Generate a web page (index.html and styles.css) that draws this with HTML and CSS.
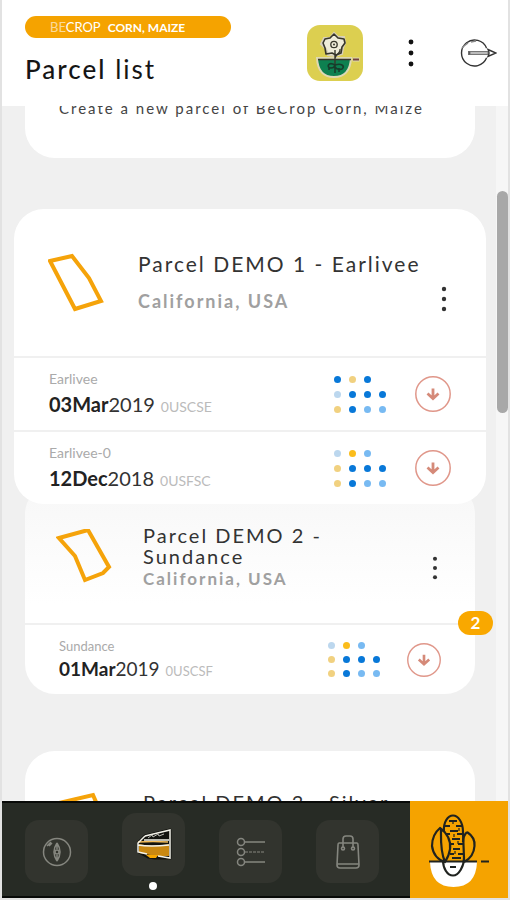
FILE: index.html
```html
<!DOCTYPE html>
<html lang="en">
<head>
<meta charset="utf-8">
<meta name="viewport" content="width=device-width, initial-scale=1">
<title>Parcel list</title>
<link rel="stylesheet" href="styles.css">
</head>
<body>
<svg class="defs" aria-hidden="true">
  <symbol id="kebab" viewBox="0 0 8 28"><circle cx="4" cy="4" r="2.2"/><circle cx="4" cy="14" r="2.2"/><circle cx="4" cy="24" r="2.2"/></symbol>
  <symbol id="down" viewBox="0 0 36 36">
    <circle cx="18" cy="18" r="17.2" fill="none" stroke="#e0978a" stroke-width="1.5"/>
    <path d="M18 12.500v10M12.500 17.500l5.500 5 5.500-5" fill="none" stroke="#d58a79" stroke-width="2.8"/>
    <path d="M13 18l5 3 5-3-5 5z" fill="#d58a79"/>
  </symbol>
</svg>
<div class="app">
  <header class="header">
    <div class="heading">
      <div class="tag"><span class="brand"><span class="be">BE</span>CROP</span><b>CORN, MAIZE</b></div>
      <h1><b>Parcel</b> list</h1>
    </div>
    <div class="actions">
      <button class="plain" type="button" aria-label="Crop">
        <svg width="56" height="56" viewBox="0 0 56 56">
          <rect width="56" height="56" rx="13" fill="#dccf50"/>
          <path d="M10 33h34q-1 19-17 19T10 33z" fill="#0d8050" stroke="#ddd8b4" stroke-width="2"/>
          <path d="M27 8l4 4 6 0 1 6-2 5-1 6-7 2-7-1-2-6-5-5 3-6 6 0z" fill="#efecd9" stroke="#d9d0b9" stroke-width="2"/>
          <path d="M27 9l4 4 6 1 1 4-3 4-1 6-5 2-4-2-6 1-1-6-2-5 2-4 5-1z" fill="none" stroke="#37362b" stroke-width="1.600" stroke-linejoin="round"/>
          <circle cx="27" cy="19.5" r="3.2" fill="none" stroke="#37362b" stroke-width="1.3"/>
          <circle cx="27" cy="19.5" r="1" fill="#37362b"/>
          <path d="M28 25v18M28 33c2-6 6-4 5-9M11 34.500h33" fill="none" stroke="#37362b" stroke-width="1.4"/>
          <path d="M28 40c-7-4-9 3-4 3s3-3 4-3c7-2 9 1 8 3s-6 2-8-1v6M22 42v3M32 43v4" fill="none" stroke="#173c2b" stroke-width="1.6"/>
          <path d="M45.500 34.500h7" stroke="#ddd8b4" stroke-width="4"/><path d="M46 34.500h6" stroke="#74423b" stroke-width="2"/>
        </svg>
      </button>
      <button class="plain" type="button" aria-label="More options"><svg class="more" width="8" height="28"><use href="#kebab"/></svg></button>
      <button class="plain" type="button" aria-label="Log out">
        <svg width="38" height="30" viewBox="0 0 38 30" fill="none" stroke="#333" stroke-width="1.4">
          <path d="M27.500 10A13 13 0 1 0 27.500 20"/>
          <path d="M3 10l3-3M5 8l4-3M12 4l5-1" stroke="#888"/>
          <path d="M11 13.500h18v3H11z" fill="#bbb" stroke="#777" stroke-width="1"/><path d="M10 13v4"/>
          <path d="M29 11.500l8 3.500-8 3.500q2-3.500 0-7z"/>
        </svg>
      </button>
    </div>
  </header>

  <main class="content">
    <div class="list">
      <section class="card create"><p>Create a new parcel of BeCrop Corn, Maize</p></section>

      <article class="card selected">
        <div class="summary">
          <svg class="shape" width="58" height="60" viewBox="0 0 58 60"><path d="M2 8l22-5 17 22 12 23-26 8z"/></svg>
          <div class="info"><h2>Parcel DEMO 1 - Earlivee</h2><p>California, USA</p></div>
          <button class="plain menu" type="button" aria-label="Parcel 1 options"><svg width="8" height="28"><use href="#kebab"/></svg></button>
        </div>
        <div class="sample">
          <div class="details"><span class="crop">Earlivee</span><div class="line"><span class="date"><b>03Mar</b>2019</span><span class="code">0USCSE</span></div></div>
          <div class="dots"><i class="b"></i><i class="y"></i><i class="b"></i><i></i><i class="p"></i><i class="b"></i><i class="b"></i><i class="b"></i><i class="y"></i><i class="b"></i><i class="l"></i><i class="l"></i></div>
          <button class="plain download" type="button" aria-label="Download Earlivee"><svg><use href="#down"/></svg></button>
        </div>
        <div class="sample">
          <div class="details"><span class="crop">Earlivee-0</span><div class="line"><span class="date"><b>12Dec</b>2018</span><span class="code">0USFSC</span></div></div>
          <div class="dots"><i class="p"></i><i class="g"></i><i class="l"></i><i></i><i class="y"></i><i class="b"></i><i class="b"></i><i class="b"></i><i class="y"></i><i class="b"></i><i class="l"></i><i class="l"></i></div>
          <button class="plain download" type="button" aria-label="Download Earlivee-0"><svg><use href="#down"/></svg></button>
        </div>
      </article>

      <article class="card tucked">
        <div class="summary">
          <svg class="shape" width="58" height="58" viewBox="0 0 58 58"><path d="M3 9l29-8 21 37-6 6-18 7-10-24z"/></svg>
          <div class="info"><h2>Parcel DEMO 2 - Sundance</h2><p>California, USA</p></div>
          <button class="plain menu" type="button" aria-label="Parcel 2 options"><svg width="8" height="26"><use href="#kebab"/></svg></button>
        </div>
        <div class="sample">
          <span class="badge">2</span>
          <div class="details"><span class="crop">Sundance</span><div class="line"><span class="date"><b>01Mar</b>2019</span><span class="code">0USCSF</span></div></div>
          <div class="dots"><i class="p"></i><i class="g"></i><i class="l"></i><i></i><i class="y"></i><i class="b"></i><i class="b"></i><i class="b"></i><i class="y"></i><i class="b"></i><i class="l"></i><i class="l"></i></div>
          <button class="plain download" type="button" aria-label="Download Sundance"><svg><use href="#down"/></svg></button>
        </div>
      </article>

      <article class="card next">
        <div class="summary">
          <svg class="shape" width="58" height="58" viewBox="0 0 58 58"><path d="M3 11l34-8 17 39-24 12z"/></svg>
          <div class="info"><h2>Parcel DEMO 3 - Silver</h2></div>
        </div>
      </article>
    </div>
    <div class="track"><div class="thumb"></div></div>
  </main>

  <nav class="nav">
    <div class="tabs">
      <button class="tab" type="button" aria-label="Explore">
        <svg width="30" height="30" viewBox="0 0 30 30" fill="none" stroke="#85867f" stroke-width="1.5">
          <circle cx="15" cy="15" r="13.500"/><path d="M15 6q-6 9 0 18M15 6q6 9 0 18M15 6v6M15 18v6"/><circle cx="15" cy="15" r="2"/><path d="M5 9l4-4M7 9l3-3"/>
        </svg>
      </button>
      <button class="tab active" type="button" aria-label="Parcels">
        <svg width="36" height="34" viewBox="0 0 36 34">
          <path d="M3 14L9 8l25-6v28H19l-7-1-9-5z" fill="#12130f" stroke="#12130f" stroke-width="3" stroke-linejoin="round"/>
          <path d="M3 16q14 3 30 0v12H20L3 25z" fill="#c98812"/><path d="M10 27h12l-2 3h-6z" fill="#f5a600"/>
          <path d="M2 14q15-1 30 0" fill="none" stroke="#f4bd59" stroke-width="1.500"/>
          <path d="M9 8l25-6v28l-12-2M9 8l-7 7v9l9 2M2 17q12 2 31 0M8 12h25" fill="none" stroke="#f4f3ea" stroke-width="1.500"/>
          <path d="M12 10l4-3 1 2 5-3 1 2 5-2" fill="none" stroke="#babab2"/>
        </svg>
      </button>
      <button class="tab" type="button" aria-label="Tasks">
        <svg width="32" height="32" viewBox="0 0 32 32" fill="none" stroke="#85867f" stroke-width="1.500">
          <circle cx="6" cy="6" r="3.500"/><circle cx="6" cy="16" r="3.500"/><circle cx="6" cy="26" r="3.500"/><path d="M10 6h20M10 26h20"/><path d="M10 16h20" stroke-dasharray="3 1" stroke-width="1.200"/>
        </svg>
      </button>
      <button class="tab" type="button" aria-label="Shop">
        <svg width="26" height="36" viewBox="0 0 26 36" fill="none" stroke="#85867f" stroke-width="1.600">
          <path d="M4 9h18q1 0 1 2l1 20q0 3-3 3H5q-3 0-3-3l1-20q0-2 1-2zM2 30h22M8 14V5q0-3 3-3h4q3 0 3 3v9"/><circle cx="8" cy="14.500" r="1.500"/><circle cx="18" cy="14.500" r="1.500"/>
        </svg>
      </button>
    </div>
    <button class="plain product" type="button" aria-label="BeCrop Corn">
      <svg width="98" height="97" viewBox="0 1 98 97" fill="none" stroke="#20231f" stroke-width="2.200">
        <path d="M20 62h47q-1 25-23.500 25T20 62z" fill="#fff" stroke="none"/>
        <path d="M19 61.500h48M71 61.500h8"/>
        <path d="M34 32C33 22 38 15.500 43 15.500S53 22 53 32L54 58C54 66 49 75.500 43 75.500S33 68 33 60"/>
        <path d="M30 28C24 33 22 40 22 46 23 54 28 60 35 62 40 54 42 45 38 37 36 33 33 30 30 28zM31 29C31 38 30 51 35 62M57 32C63 36 65 41 64.500 46 64 53 60 59 54 62M57 32C54 35 53 38 53 42"/>
        <path d="M39 21h8M35 26h5M46 26h7M40 31h8M36 34h4M47 34h6M42 39h8M41 44h3M48 44h5M43 49h7M40 54h4M48 54h5M42 58h9M40 67h6" stroke-width="2"/>
        <path d="M43 21v3M49 28v3M44 34v3M48 41v3M45 51v3" stroke-width="1.200"/>
      </svg>
    </button>
  </nav>
</div>
</body>
</html>
```
FILE: styles.css
```css
* { box-sizing: border-box; }
body { margin: 0; font-family: Lato, "Liberation Sans", sans-serif; color: #333; }
h1, h2, p { margin: 0; font-weight: 400; }
.defs { position: absolute; width: 0; height: 0; }
svg { display: block; flex: none; }
.plain { border: 0; padding: 0; background: none; display: grid; place-items: center; cursor: pointer; }

.app {
  display: flex; flex-direction: column; height: 100vh; overflow: hidden;
  border: solid #e2e2e2; border-width: 0 2px 2px;
}
.header { flex: none; display: flex; justify-content: space-between; padding: 16px 11px 20px 23px; background: #fff; }
.tag {
  display: flex; align-items: center; gap: 7px; width: 206px; height: 22px; padding-left: 25px;
  border-radius: 11px; background: #f5a300; color: #fff; font-size: 12px;
}
.brand { font-size: 13px; }
.be { opacity: .6; }
h1 { margin-top: 14px; font-size: 26px; line-height: 34px; letter-spacing: 2px; color: #151515; }
h1 b { font-weight: 500; }
.actions { display: flex; align-items: center; gap: 44px; padding-top: 4px; }
.more { fill: #111; transform: scale(1.1); }

.content { flex: 1; min-height: 0; display: flex; overflow: hidden; background: #f0f0f0; }
.list { flex: 1; min-width: 0; padding: 0 10px 0 12px; }
.card { margin: 0 11px; border-radius: 30px; background: #fff; }
.create { margin-top: -28px; margin-bottom: 51px; padding: 20px 34px 40px; font-size: 15px; line-height: 20px; letter-spacing: 2px; color: #444; white-space: nowrap; }
.selected { position: relative; z-index: 1; margin: 0; }
.summary { display: flex; align-items: center; }
.shape { fill: none; stroke: #f5a30a; stroke-width: 4; }
.info { flex: 1; min-width: 0; }
.info p { font-weight: 700; color: #a0a0a0; letter-spacing: 2px; }
.menu { fill: #333; }
.selected .summary { height: 147px; padding: 0 38px 0 34px; }
.selected .shape { margin-right: 32px; }
.selected h2 { font-size: 21px; line-height: 24px; letter-spacing: 2px; white-space: nowrap; }
.selected .info p { margin-top: 12px; font-size: 18px; line-height: 26px; }
.selected .menu { margin-top: 32px; }

.sample { position: relative; display: flex; align-items: center; height: 74px; padding: 0 35px; border-top: 2px solid #f0f0f0; }
.details { flex: 1; padding-top: 2px; }
.crop { display: block; font-size: 14px; line-height: 20px; color: #aaa; }
.line { display: flex; align-items: baseline; gap: 6px; font-size: 20px; line-height: 30px; }
.date b { color: #222; }
.code { font-size: 14px; color: #bbb; }
.dots { display: grid; grid-template-columns: repeat(4, 7px); gap: 8px; margin-right: 29px; }
.dots i { height: 7px; border-radius: 50%; }
.dots .b { background: #0878d8; }
.dots .l { background: #78baf2; }
.dots .p { background: #bcd7ee; }
.dots .y { background: #f1d180; }
.dots .g { background: #fbbd1c; }
.download svg { width: 36px; height: 36px; }

.tucked { margin-top: -20px; margin-bottom: 57px; background: linear-gradient(#f7f7f7, #fff 120px); }
.tucked .summary, .next .summary { padding: 0 36px 0 31px; }
.tucked .summary { height: 139px; padding-top: 8px; }
.tucked .shape, .next .shape { margin-right: 29px; }
.tucked h2, .next h2 { font-size: 20px; line-height: 21px; letter-spacing: 2px; }
.tucked .info { padding-right: 50px; }
.tucked .info p { font-size: 17px; line-height: 24px; }
.tucked .menu { margin-top: 20px; }
.tucked .sample { height: 71px; padding: 0 34px; }
.tucked .details { padding-top: 0; }
.tucked .dots { margin-right: 27px; gap: 7px 8px; }
.tucked .download svg { width: 34px; height: 34px; }
.tucked .crop { font-size: 13px; }
.tucked .line { font-size: 19px; line-height: 26px; }
.tucked .code { font-size: 13px; }
.badge {
  position: absolute; top: -14px; right: -18px; width: 35px; height: 24px; border-radius: 12px;
  background: #f9a800; color: #fff; font-size: 17px; font-weight: 700; line-height: 24px; text-align: center;
}
.next .summary { align-items: flex-start; padding-top: 41px; }
.next { height: 200px; }

.track { flex: none; width: 12px; padding-top: 85px; background: #f6f6f6; }
.thumb { height: 222px; margin: 0 0 0 1px; border-radius: 6px; background: #a8a8a8; }

.nav { flex: none; display: flex; height: 97px; background: #272b25; }
.tabs { flex: 1; display: flex; align-items: center; gap: 34px; padding: 4px 0 0 23px; border: solid #080a08; border-width: 2px 0; }
.tab {
  position: relative; display: grid; place-items: center; width: 63px; height: 63px; padding: 0;
  border: 0; border-radius: 14px; background: #32342e; cursor: pointer;
}
.active { margin-bottom: 14px; }
.active::after { content: ""; position: absolute; bottom: -14px; left: 27px; width: 8px; height: 8px; border-radius: 50%; background: #fff; }
.product { width: 98px; background: #f5a300; }
```
